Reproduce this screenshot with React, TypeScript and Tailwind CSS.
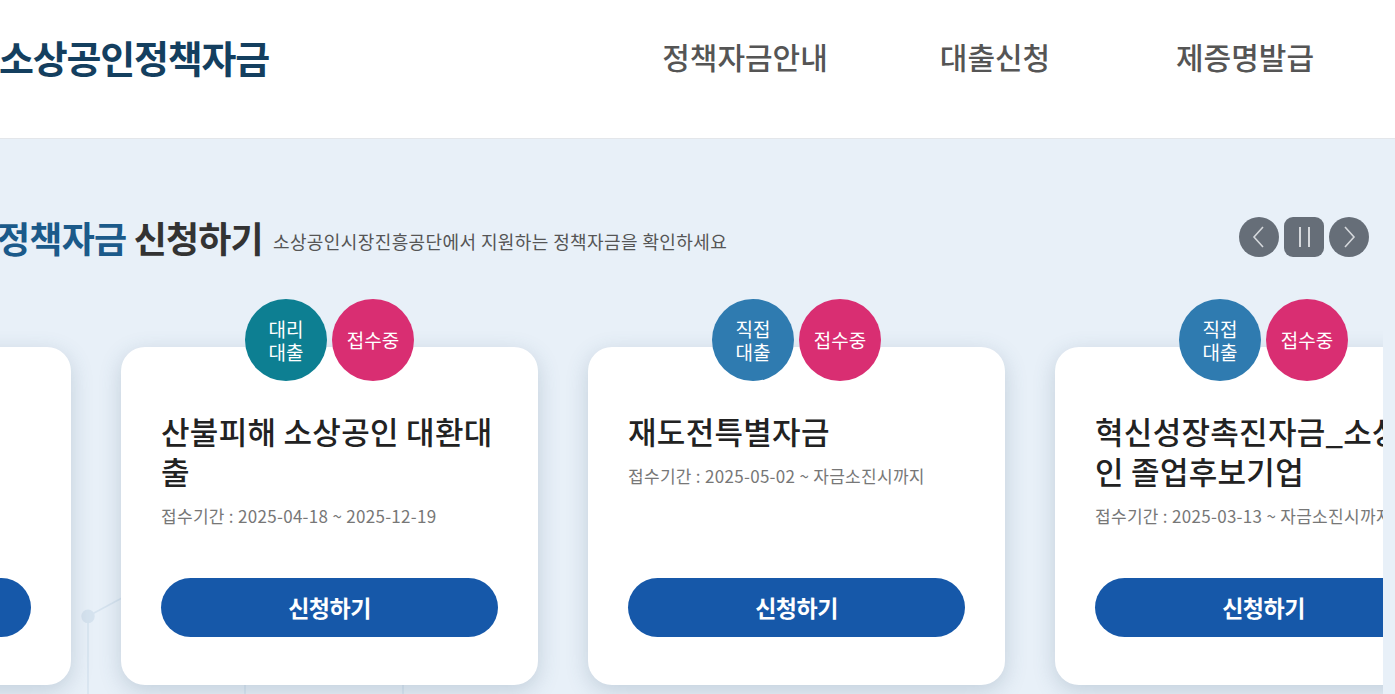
import React from "react";

interface Fund {
  kind: "대리" | "직접";
  lines: string[];
  period: string;
}

const funds: Fund[] = [
  { kind: "직접", lines: ["긴급경영안정자금"], period: "접수기간 : 2025-04-01 ~ 자금소진시까지" },
  { kind: "대리", lines: ["산불피해 소상공인 대환대", "출"], period: "접수기간 : 2025-04-18 ~ 2025-12-19" },
  { kind: "직접", lines: ["재도전특별자금"], period: "접수기간 : 2025-05-02 ~ 자금소진시까지" },
  { kind: "직접", lines: ["혁신성장촉진자금_소상공", "인 졸업후보기업"], period: "접수기간 : 2025-03-13 ~ 자금소진시까지" },
];

const font = { fontFamily: '"Noto Sans CJK KR", "Noto Sans", sans-serif' };

const FundCard: React.FC<{ fund: Fund }> = ({ fund }) => (
  <div className="relative flex h-[338px] w-[417px] shrink-0 flex-col rounded-[24px] bg-white px-[40px] pb-[48px] pt-[64px] shadow-[0_6px_22px_rgba(60,90,120,0.22)]">
    <div className="absolute left-0 right-0 top-[-48px] flex justify-center gap-[5px]">
      <div
        className={`flex h-[82px] w-[82px] flex-col items-center justify-center rounded-full text-[19px] leading-[23px] text-white ${
          fund.kind === "대리" ? "bg-[#0d7f92]" : "bg-[#2f7bb0]"
        }`}
      >
        <span>{fund.kind}</span>
        <span>대출</span>
      </div>
      <div className="flex h-[82px] w-[82px] items-center justify-center rounded-full bg-[#d92e72] text-[19px] text-white">
        접수중
      </div>
    </div>
    <h3 className="whitespace-nowrap text-[31px] font-medium leading-[40px] tracking-[0.3px] text-[#222]">
      {fund.lines.map((line, i) => (
        <div key={i}>{line}</div>
      ))}
    </h3>
    <p className="mt-[13px] whitespace-nowrap text-[17px] leading-[24px] tracking-[0.3px] text-[#777]">
      {fund.period}
    </p>
    <button className="mt-auto h-[59px] w-full rounded-full bg-[#1658a9] text-[23px] font-bold tracking-[-0.5px] text-white">
      신청하기
    </button>
  </div>
);

export default function App() {
  return (
    <div className="h-[694px] w-[1395px] overflow-hidden bg-[#e8f0f8]" style={font}>
      <header className="flex h-[139px] items-center border-b border-[#e3e6ea] bg-white pb-[25px]">
        <h1 className="ml-[-1px] text-[38px] font-bold tracking-[-1.2px] text-[#143f5f]">소상공인정책자금</h1>
        <nav className="ml-auto mr-[25px] flex">
          {["정책자금안내", "대출신청", "제증명발급"].map((item) => (
            <a key={item} className="w-[250px] text-center text-[30px] font-medium text-[#555]">
              {item}
            </a>
          ))}
        </nav>
      </header>

      <section className="relative pt-[78px]">
        <svg className="absolute left-0 top-0 h-full w-full" viewBox="0 0 1395 555" preserveAspectRatio="none">
          <g stroke="#d6e3ef" strokeWidth="1.5" fill="#d6e3ef">
            <line x1="88" y1="468" x2="160" y2="430" />
            <line x1="88" y1="468" x2="88" y2="555" />
            <line x1="245" y1="500" x2="245" y2="555" />
            <line x1="403" y1="500" x2="403" y2="555" />
            <circle cx="88" cy="468" r="6" />
            <circle cx="88" cy="555" r="6" />
            <circle cx="245" cy="555" r="6" />
            <circle cx="403" cy="555" r="6" />
          </g>
        </svg>

        <div className="relative flex h-[40px] items-center pr-[26px]">
          <h2 className="ml-[-3px] text-[36px] font-bold tracking-[-0.8px] text-[#333]">
            <span className="text-[#1b5a8a]">정책자금</span> 신청하기
          </h2>
          <p className="ml-[10px] mt-[8px] text-[18px] tracking-[0.4px] text-[#555]">
            소상공인시장진흥공단에서 지원하는 정책자금을 확인하세요
          </p>
          <div className="ml-auto flex gap-[5px]">
            <button className="flex h-[40px] w-[40px] items-center justify-center rounded-full bg-[#666e78]">
              <svg width="16" height="24" viewBox="0 0 16 24" fill="none" stroke="#d5d8dc" strokeWidth="1.6">
                <path d="M12 2 3 12l9 10" />
              </svg>
            </button>
            <button className="flex h-[40px] w-[40px] items-center justify-center gap-[7px] rounded-[9px] bg-[#666e78]">
              <span className="h-[20px] w-[2px] bg-[#d5d8dc]" />
              <span className="h-[20px] w-[2px] bg-[#d5d8dc]" />
            </button>
            <button className="flex h-[40px] w-[40px] items-center justify-center rounded-full bg-[#666e78]">
              <svg width="16" height="24" viewBox="0 0 16 24" fill="none" stroke="#d5d8dc" strokeWidth="1.6">
                <path d="M4 2l9 10-9 10" />
              </svg>
            </button>
          </div>
        </div>

        <div className="relative mt-[42px] w-[1383px] overflow-hidden">
          <div className="ml-[-346px] flex gap-[50px] pb-[20px] pt-[48px]">
            {funds.map((fund, i) => (
              <FundCard key={i} fund={fund} />
            ))}
          </div>
        </div>
      </section>
    </div>
  );
}
